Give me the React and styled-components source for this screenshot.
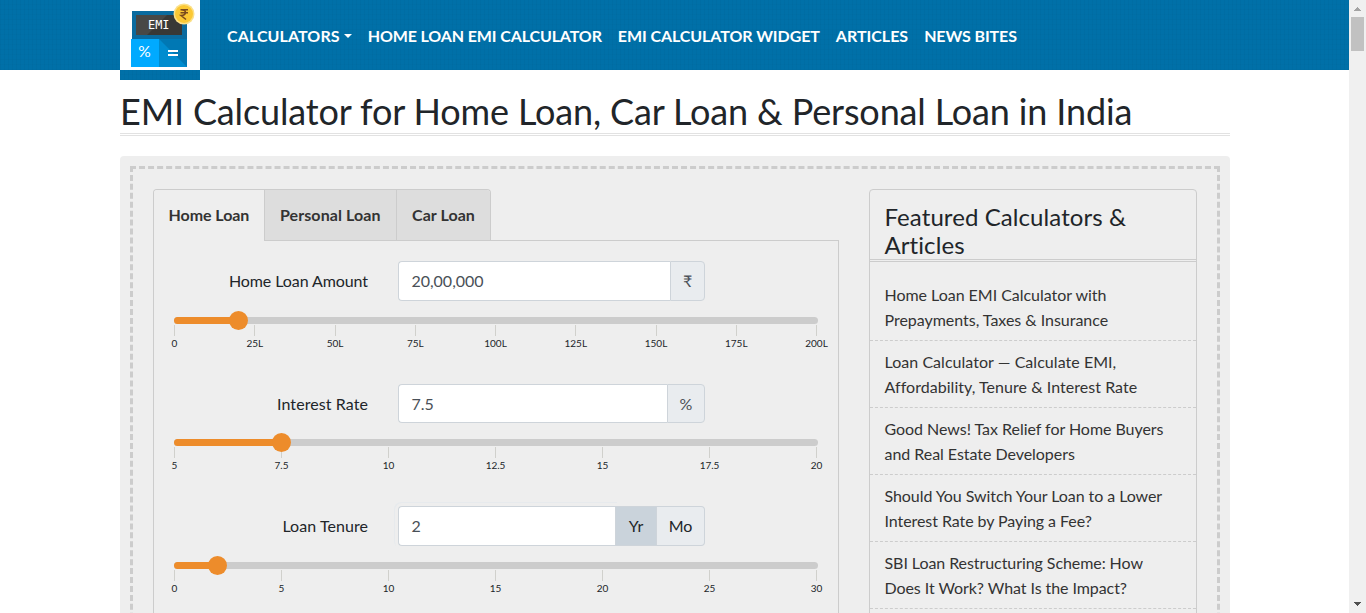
import React from 'react';
import styled, { createGlobalStyle } from 'styled-components';

const GlobalStyle = createGlobalStyle`
  *, *::before, *::after { box-sizing: border-box; }
  body {
    margin: 0;
    overflow: hidden;
    background: #fff;
    color: #212529;
    font-family: Lato, "Liberation Sans", sans-serif;
    font-size: 16px;
    line-height: 25px;
    font-variant-ligatures: none;
  }
  a { color: inherit; text-decoration: none; }
  h1, h2, ul { margin: 0; padding: 0; font-weight: 400; }
  ul { list-style: none; }
`;

const Shell = styled.div`
  display: flex;
  width: 1366px;
  height: 613px;
  overflow: hidden;
`;

const Page = styled.div`
  flex: 1;
  min-width: 0;
`;

const Container = styled.div`
  width: 1110px;
  margin: 0 119px 0 120px;
`;

const headerTexture = `
  repeating-linear-gradient(90deg, rgba(0, 0, 0, 0.025) 0 1px, transparent 1px 4px),
  repeating-linear-gradient(0deg, rgba(0, 0, 0, 0.015) 0 1px, transparent 1px 5px)`;

const Header = styled.header`
  height: 70px;
  background: ${headerTexture}, #0070a8;
`;

const NavBar = styled(Container)`
  display: flex;
  align-items: flex-start;
`;

const Brand = styled.a`
  flex: none;
  width: 80px;
  height: 80px;
  margin-right: 19px;
  background: ${headerTexture}, #0070a8;
  svg { display: block; }
`;

const Nav = styled.nav`
  display: flex;
  padding-top: 23px;
`;

const NavLink = styled.a`
  display: flex;
  align-items: center;
  padding: 0 8px;
  color: #fff;
  font-weight: 700;
  letter-spacing: ${p => p.$tracking || 0}px;
  white-space: nowrap;
`;

const Caret = styled.span`
  margin-left: 4px;
  border: 4.8px solid transparent;
  border-top-color: #fff;
  border-bottom: 0;
`;

const Title = styled.h1`
  height: 66px;
  padding-top: 19px;
  font-size: 36px;
  line-height: 45px;
  letter-spacing: -0.14px;
  white-space: nowrap;
  border-bottom: 3px double #e2e2e2;
`;

const Widget = styled.main`
  margin-top: 20px;
  padding: 10px;
  background: #eee;
  border-radius: 4px;
`;

const Stitch = styled.div`
  display: flex;
  gap: 30px;
  height: 560px;
  padding: 20px;
  border: 3px dashed #ccc;
`;

const Calculator = styled.section`
  width: 686px;
`;

const Tabs = styled.div`
  display: flex;
  width: 338px;
  height: 52px;
  border: 1px solid #ccc;
  border-bottom: 0;
  border-radius: 4px 4px 0 0;
  overflow: hidden;
`;

const Tab = styled.a`
  flex: none;
  width: ${p => p.$width}px;
  padding: 12px 0 0 ${p => (p.$active ? 14.5 : 15)}px;
  font-weight: 700;
  letter-spacing: ${p => p.$tracking || 0}px;
  color: #333;
  white-space: nowrap;
  background: ${p => (p.$active ? '#eee' : '#ddd')};
  border-right: 1px solid #ccc;
  border-bottom: ${p => (p.$active ? '0' : '1px solid #ccc')};
  &:last-child { border-right: 0; }
`;

const TabRow = styled.div`
  display: flex;
`;

const TabFiller = styled.div`
  flex: 1;
  border-bottom: 1px solid #ccc;
`;

const Panel = styled.div`
  height: 480px;
  padding: 20px 20px 0;
  border: solid #ccc;
  border-width: 0 1px;
`;

const Field = styled.div`
  height: 122.5px;
`;

const FieldRow = styled.div`
  display: flex;
  align-items: center;
  gap: 30px;
  height: 39.5px;
`;

const Label = styled.label`
  width: 194px;
  text-align: right;
  letter-spacing: ${p => p.$tracking || 0}px;
`;

const Group = styled.div`
  display: flex;
  width: 307px;
  height: 100%;
  color: #495057;
`;

const Value = styled.div`
  display: flex;
  align-items: center;
  flex: 1;
  padding-left: 12.4px;
  background: #fff;
  border: 1px solid #ced4da;
  border-right: 0;
  border-radius: 4px 0 0 4px;
  ${p => p.$focus && 'box-shadow: 0 0 0 3px #eee, -1px -1px 0 3px #e7eaed;'}
`;

const Addon = styled.div`
  display: flex;
  align-items: center;
  justify-content: center;
  width: ${p => p.$width}px;
  color: ${p => (p.$dark ? '#212529' : '#495057')};
  background: ${p => (p.$selected ? '#cad3db' : '#e9ecef')};
  border: 1px solid #ced4da;
  border-left-width: ${p => (p.$joined ? 0 : 1)}px;
  border-radius: ${p => (p.$selected ? '0' : '0 4px 4px 0')};
`;

const Track = styled.div`
  display: flex;
  align-items: center;
  height: 7px;
  margin-top: 16.4px;
  background: #ccc;
  border-radius: 4px;
`;

const Fill = styled.div`
  height: 7px;
  background: #ed8c2b;
  border-radius: 4px 0 0 4px;
`;

const Thumb = styled.div`
  flex: none;
  z-index: 1;
  width: 19.2px;
  height: 19.2px;
  margin-left: -9.6px;
  background: #ed8c2b;
  border-radius: 50%;
`;

const Scale = styled.div`
  display: flex;
  justify-content: space-between;
  margin-top: 1px;
  padding-right: 1px;
`;

const Tick = styled.div`
  display: flex;
  flex-direction: column;
  align-items: center;
  width: 1px;
  font-size: 10px;
  line-height: 14px;
  white-space: nowrap;
  &::before {
    content: "";
    width: 1px;
    height: 11px;
    background: #d0d0cc;
  }
`;

const Sidebar = styled.aside`
  width: 328px;
  border: 1px solid #ccc;
  border-radius: 4px;
`;

const SideTitle = styled.h2`
  height: 72px;
  margin-bottom: 12px;
  padding: 13px 14.5px 0;
  font-size: 24px;
  line-height: 28px;
  letter-spacing: 0.08px;
  border-bottom: 3px double #ccc;
`;

const Article = styled.li`
  padding: 8px 14.5px;
  color: #333;
  letter-spacing: ${p => p.$tracking}px;
  white-space: nowrap;
  border-bottom: 1px dashed #ccc;
`;

const ScrollBar = styled.div`
  display: flex;
  flex-direction: column;
  align-items: center;
  width: 17px;
  padding: 7px 0 7px;
  background: #f0f0f0;
`;

const ScrollThumb = styled.div`
  width: 13px;
  height: 34px;
  margin: 6px 0 auto;
  background: #c1c1c1;
`;

const Logo = () => (
  <svg width="80" height="70" viewBox="0 0 80 70">
    <rect width="80" height="70" fill="#fff" />
    <rect x="12" y="11" width="55" height="28" fill="#0a6b9f" />
    <rect x="16" y="15" width="46" height="20" fill="#484846" />
    <path d="M27 35 47 15H62V35Z" fill="#383836" />
    <text x="28" y="29" fill="#fff" fontSize="12.5" fontFamily="DejaVu Sans Mono, monospace" textLength="21.5" lengthAdjust="spacingAndGlyphs">EMI</text>
    <rect x="11" y="39" width="28" height="28" fill="#00aaff" />
    <rect x="39" y="39" width="28" height="28" fill="#0078b4" />
    <path d="M39 39V67H67Z" fill="#008ccf" />
    <text x="18.2" y="57" fill="#fff" fontSize="15" fontFamily="Lato, sans-serif" textLength="12.5" lengthAdjust="spacingAndGlyphs">%</text>
    <path d="M48 51H58M48 55H58" stroke="#fff" strokeWidth="2" />
    <circle cx="64" cy="14" r="10.5" fill="#fbe08a" />
    <circle cx="64" cy="14" r="9" fill="#fbc834" />
    <path d="M60.5 9.7H68M60.5 12.7H68M61 9.7C67 9.7 67 15.5 61 15.5L66 19.5" fill="none" stroke="#7a4a1e" strokeWidth="1.5" />
  </svg>
);

const Slider = ({ percent, ticks }) => (
  <>
    <Track>
      <Fill style={{ width: `${percent}%` }} />
      <Thumb />
    </Track>
    <Scale>
      {ticks.map(t => <Tick key={t}>{t}</Tick>)}
    </Scale>
  </>
);

const articles = [
  ['Home Loan EMI Calculator with', 'Prepayments, Taxes & Insurance', -0.03],
  ['Loan Calculator — Calculate EMI,', 'Affordability, Tenure & Interest Rate', 0.04],
  ['Good News! Tax Relief for Home Buyers', 'and Real Estate Developers', -0.04],
  ['Should You Switch Your Loan to a Lower', 'Interest Rate by Paying a Fee?', -0.07],
  ['SBI Loan Restructuring Scheme: How', 'Does It Work? What Is the Impact?', -0.07],
];

export default function App() {
  return (
    <Shell>
      <GlobalStyle />
      <Page>
        <Header>
          <NavBar>
            <Brand href="#"><Logo /></Brand>
            <Nav>
              <NavLink $tracking={0.1} href="#">CALCULATORS<Caret /></NavLink>
              <NavLink $tracking={-0.12} href="#">HOME LOAN EMI CALCULATOR</NavLink>
              <NavLink $tracking={-0.08} href="#">EMI CALCULATOR WIDGET</NavLink>
              <NavLink href="#">ARTICLES</NavLink>
              <NavLink $tracking={-0.1} href="#">NEWS BITES</NavLink>
            </Nav>
          </NavBar>
        </Header>
        <Container>
          <Title>EMI Calculator for Home Loan, Car Loan &amp; Personal Loan in India</Title>
          <Widget>
            <Stitch>
              <Calculator>
                <TabRow>
                  <Tabs>
                    <Tab $width={111} $tracking={-0.06} $active href="#">Home Loan</Tab>
                    <Tab $width={132} $tracking={0.08} href="#">Personal Loan</Tab>
                    <Tab $width={93} $tracking={0.06} href="#">Car Loan</Tab>
                  </Tabs>
                  <TabFiller />
                </TabRow>
                <Panel>
                  <Field>
                    <FieldRow>
                      <Label $tracking={-0.08}>Home Loan Amount</Label>
                      <Group>
                        <Value>20,00,000</Value>
                        <Addon $width={35}>₹</Addon>
                      </Group>
                    </FieldRow>
                    <Slider percent={10} ticks={['0', '25L', '50L', '75L', '100L', '125L', '150L', '175L', '200L']} />
                  </Field>
                  <Field>
                    <FieldRow>
                      <Label $tracking={0.08}>Interest Rate</Label>
                      <Group>
                        <Value>7.5</Value>
                        <Addon $width={38}>%</Addon>
                      </Group>
                    </FieldRow>
                    <Slider percent={16.667} ticks={['5', '7.5', '10', '12.5', '15', '17.5', '20']} />
                  </Field>
                  <Field>
                    <FieldRow>
                      <Label $tracking={0.06}>Loan Tenure</Label>
                      <Group>
                        <Value $focus>2</Value>
                        <Addon $width={42} $selected $dark>Yr</Addon>
                        <Addon $width={48} $joined $dark>Mo</Addon>
                      </Group>
                    </FieldRow>
                    <Slider percent={6.8} ticks={['0', '5', '10', '15', '20', '25', '30']} />
                  </Field>
                </Panel>
              </Calculator>
              <Sidebar>
                <SideTitle>Featured Calculators &amp;<br />Articles</SideTitle>
                <ul>
                  {articles.map(([a, b, tracking]) => (
                    <Article key={a} $tracking={tracking}><a href="#">{a}<br />{b}</a></Article>
                  ))}
                </ul>
              </Sidebar>
            </Stitch>
          </Widget>
        </Container>
      </Page>
      <ScrollBar>
        <svg width="7" height="4" viewBox="0 0 7 4" shapeRendering="crispEdges"><path d="M3 0H4V1H5V2H6V3H7V4H0V3H1V2H2V1H3Z" fill="#a3a3a3" /></svg>
        <ScrollThumb />
        <svg width="7" height="4" viewBox="0 0 7 4" shapeRendering="crispEdges"><path d="M0 0H7V1H6V2H5V3H4V4H3V3H2V2H1V1H0Z" fill="#505050" /></svg>
      </ScrollBar>
    </Shell>
  );
}
